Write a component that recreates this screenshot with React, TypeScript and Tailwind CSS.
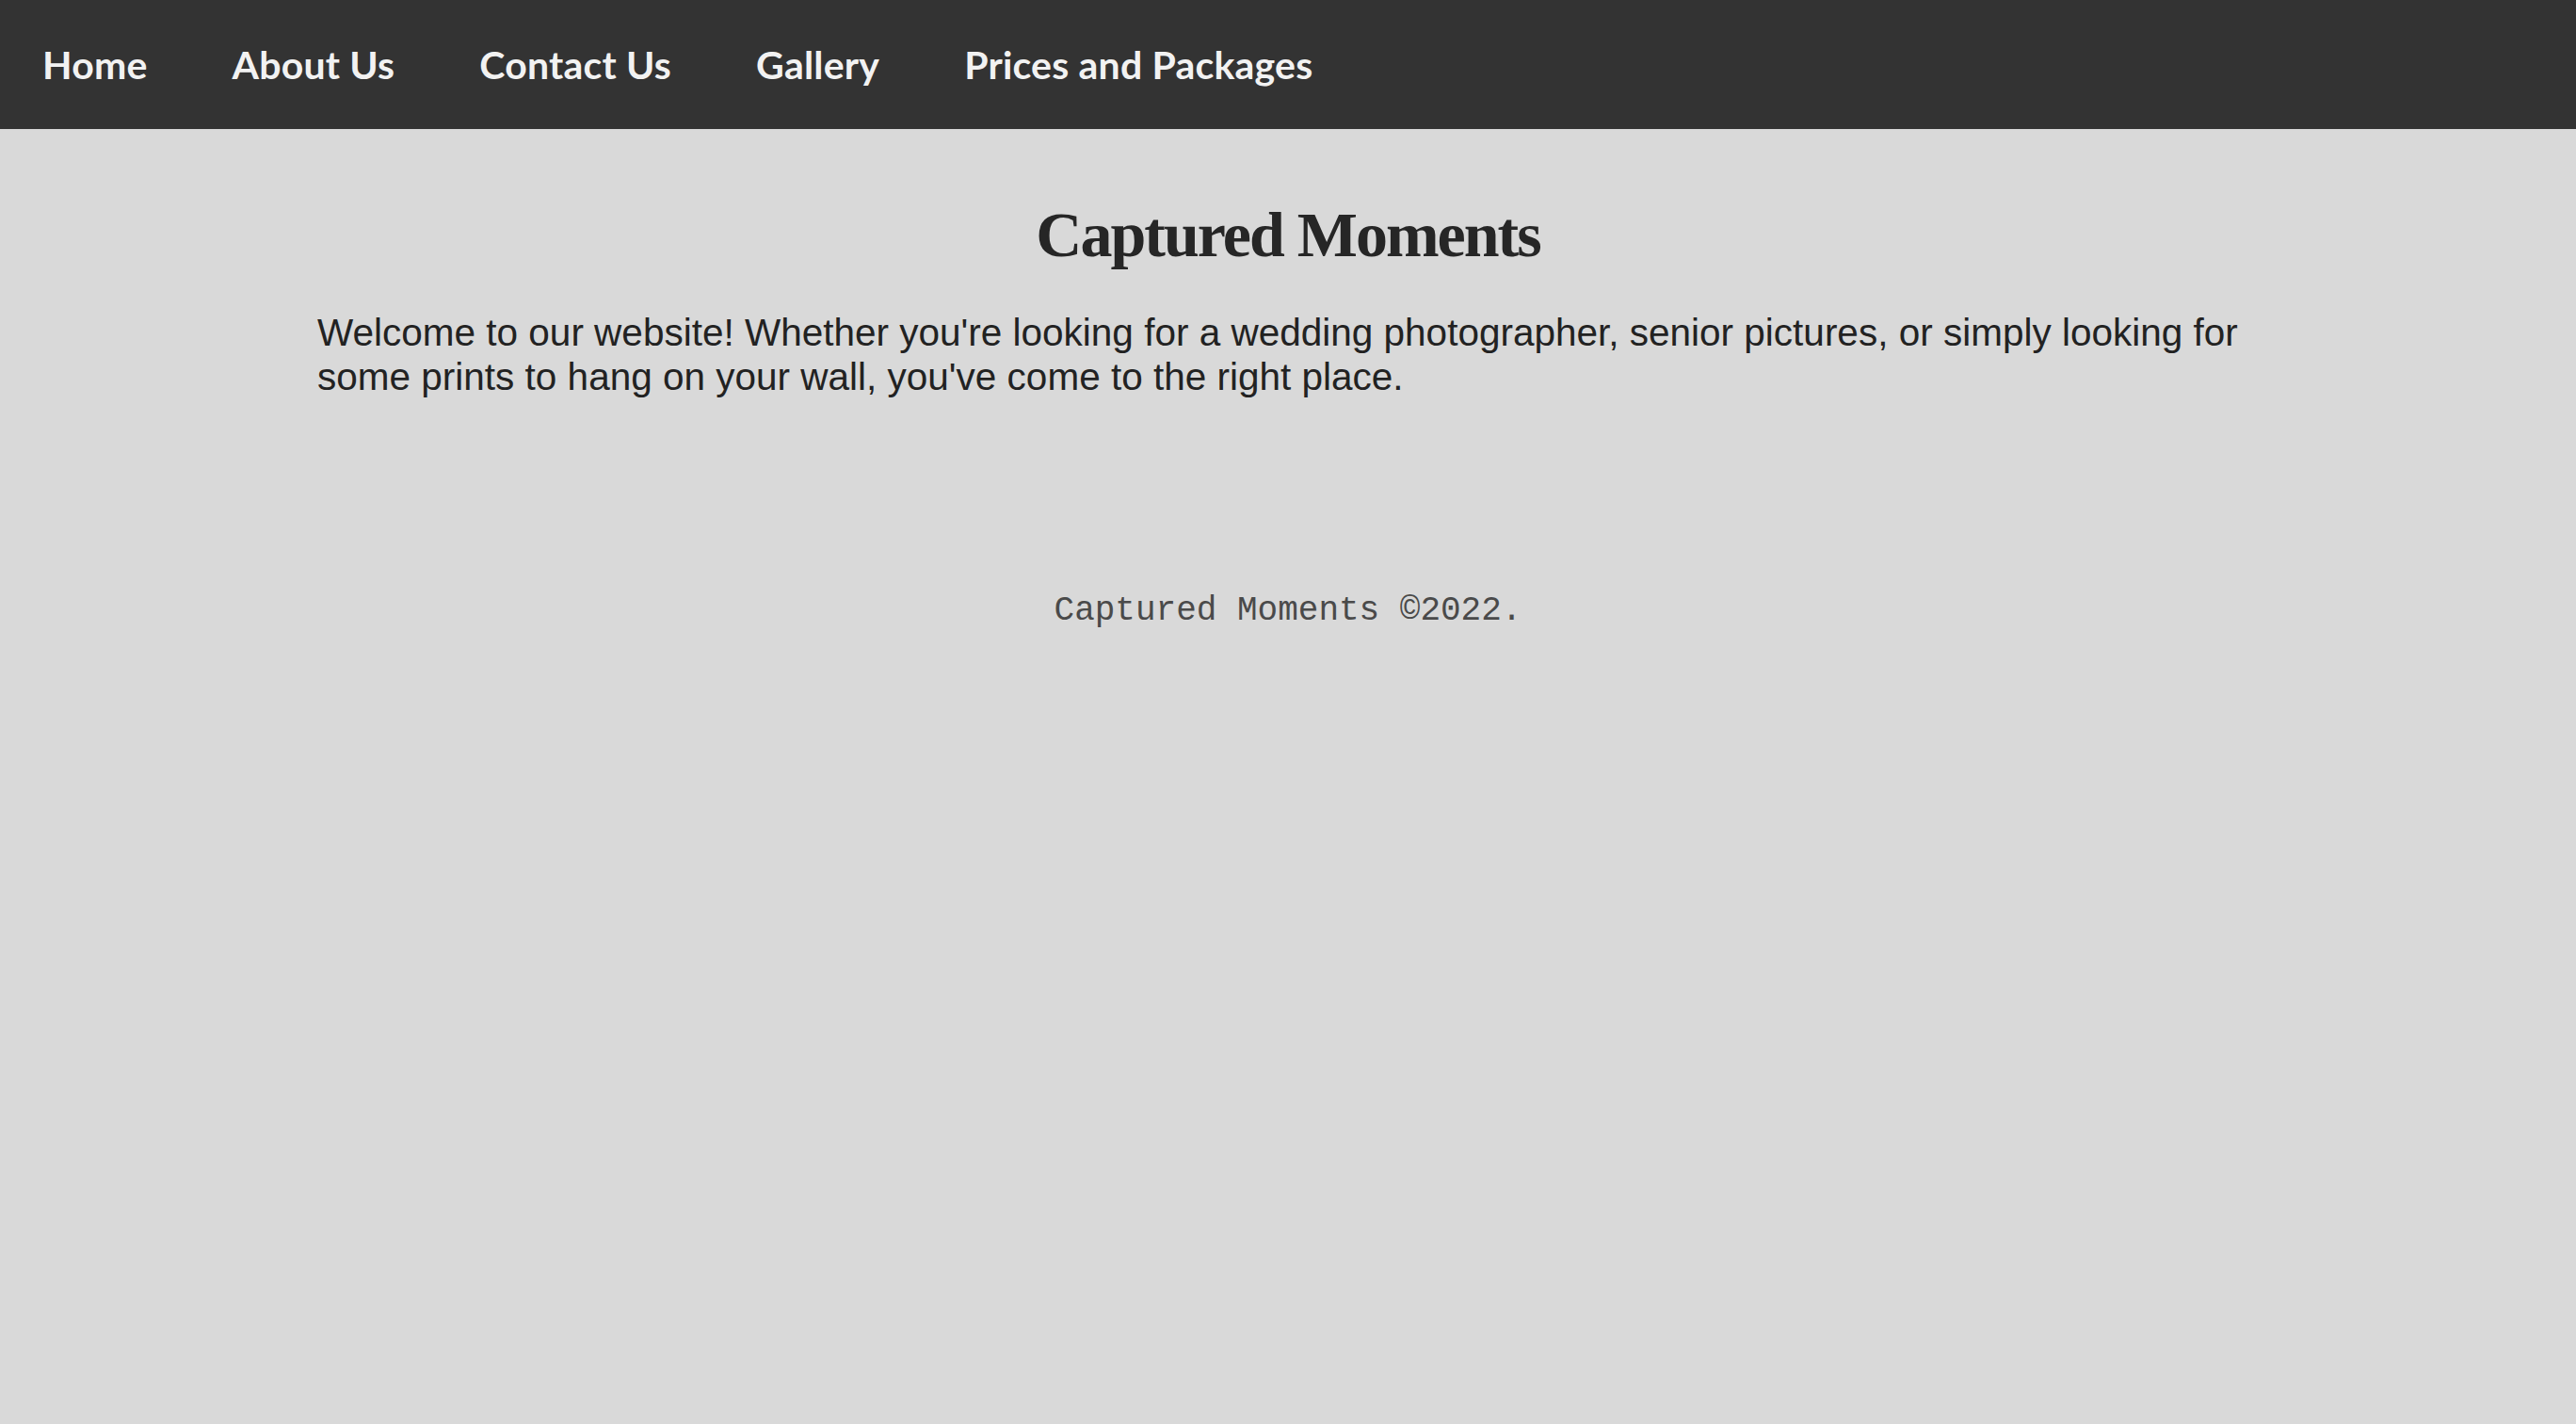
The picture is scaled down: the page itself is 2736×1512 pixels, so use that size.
import React from "react";

const links = ["Home", "About Us", "Contact Us", "Gallery", "Prices and Packages"];

const App = () => {
  return (
    <div className="min-h-screen w-full bg-[#d9d9d9]">
      <nav className="flex items-center h-[137px] bg-[#333333]">
        {links.map((link) => (
          <a
            key={link}
            href="#"
            className="px-[45px] text-[41px] font-bold tracking-[0.2px] text-[#f2f2f2] font-['Lato',sans-serif] leading-none"
          >
            {link}
          </a>
        ))}
      </nav>
      <main className="w-[2062px] mx-auto pt-[72px]">
        <h1 className="text-center text-[68px] font-bold tracking-[-2px] text-[#262626] font-['Liberation_Serif',serif] leading-[80px]">
          Captured Moments
        </h1>
        <p className="mt-[41px] text-[40.5px] leading-[47px] text-[#222222] font-['Liberation_Sans',Arial,sans-serif]">
          Welcome to our website! Whether you're looking for a wedding
          photographer, senior pictures, or simply looking for some prints to
          hang on your wall, you've come to the right place.
        </p>
      </main>
      <footer className="mt-[198px] text-center text-[36px] text-[#4a4a4a] font-['Liberation_Mono',monospace]">
        Captured Moments ©2022.
      </footer>
    </div>
  );
};

export default App;
